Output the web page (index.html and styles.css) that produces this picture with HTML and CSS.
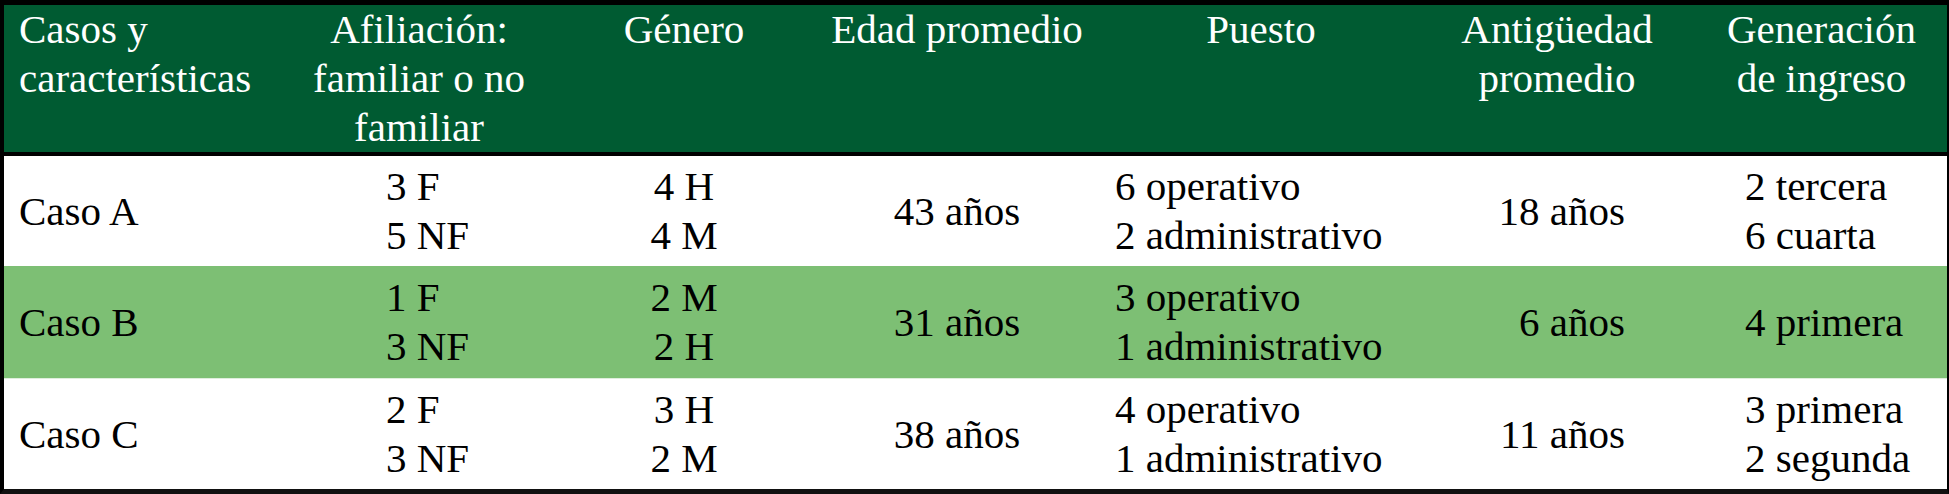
FILE: index.html
```html
<!DOCTYPE html>
<html lang="es">
<head>
<meta charset="utf-8">
<title>Casos y características</title>
<link rel="stylesheet" href="styles.css">
</head>
<body>
<div class="frame">
<table class="cases">
  <colgroup>
    <col class="c1"><col class="c2"><col class="c3"><col class="c4"><col class="c5"><col class="c6"><col class="c7">
  </colgroup>
  <thead>
    <tr>
      <th class="left">Casos y<br>características</th>
      <th>Afiliación:<br>familiar o no<br>familiar</th>
      <th>Género</th>
      <th>Edad promedio</th>
      <th>Puesto</th>
      <th>Antigüedad<br>promedio</th>
      <th>Generación<br>de ingreso</th>
    </tr>
  </thead>
  <tbody>
    <tr class="row-a">
      <td class="left">Caso A</td>
      <td class="afil">3 F<br>5 NF</td>
      <td class="center">4 H<br>4 M</td>
      <td class="center">43 años</td>
      <td class="puesto">6 operativo<br>2 administrativo</td>
      <td class="antig">18 años</td>
      <td class="gen">2 tercera<br>6 cuarta</td>
    </tr>
    <tr class="row-b">
      <td class="left">Caso B</td>
      <td class="afil">1 F<br>3 NF</td>
      <td class="center">2 M<br>2 H</td>
      <td class="center">31 años</td>
      <td class="puesto">3 operativo<br>1 administrativo</td>
      <td class="antig">6 años</td>
      <td class="gen">4 primera</td>
    </tr>
    <tr class="row-c">
      <td class="left">Caso C</td>
      <td class="afil">2 F<br>3 NF</td>
      <td class="center">3 H<br>2 M</td>
      <td class="center">38 años</td>
      <td class="puesto">4 operativo<br>1 administrativo</td>
      <td class="antig">11 años</td>
      <td class="gen">3 primera<br>2 segunda</td>
    </tr>
  </tbody>
</table>
</div>
</body>
</html>
```
FILE: styles.css
```css
html, body {
  margin: 0;
  padding: 0;
  background: #ffffff;
  font-family: "Liberation Serif", "Times New Roman", serif;
}

.frame {
  box-sizing: border-box;
  width: 1949px;
  height: 494px;
  border-top: 5px solid #000;
  border-left: 4px solid #000;
  border-right: 2px solid #000;
  border-bottom: 5px solid #111;
  overflow: hidden;
}

.cases {
  width: 1943px;
  border-collapse: collapse;
  table-layout: fixed;
  font-family: "Liberation Serif", "Times New Roman", serif;
  font-size: 41px;
  line-height: 49px;
  color: #000;
}

.c1 { width: 276px; }
.c2 { width: 278px; }
.c3 { width: 252px; }
.c4 { width: 294px; }
.c5 { width: 314px; }
.c6 { width: 278px; }
.c7 { width: 251px; }

.cases th {
  background: #005b32;
  color: #ffffff;
  font-weight: normal;
  text-align: center;
  vertical-align: top;
  height: 147px;
  padding: 0;
  white-space: nowrap;
  border-bottom: 4px solid #000;
}

.cases td {
  padding: 0;
  vertical-align: middle;
  white-space: nowrap;
}

.cases th.left,
.cases td.left {
  text-align: left;
  padding-left: 15px;
}

.row-a td { height: 110px; background: #ffffff; }
.row-b td { height: 112px; background: #7dbf74; }
.row-c td { height: 110px; background: #ffffff; border-top: 1px solid #dfeedd; }

.cases td.center { text-align: center; }
.cases td.afil { text-align: left; padding-left: 106px; }
.cases td.puesto { text-align: left; padding-left: 11px; }
.cases td.antig { text-align: right; padding-right: 71px; }
.cases td.gen { text-align: left; padding-left: 49px; }
```
